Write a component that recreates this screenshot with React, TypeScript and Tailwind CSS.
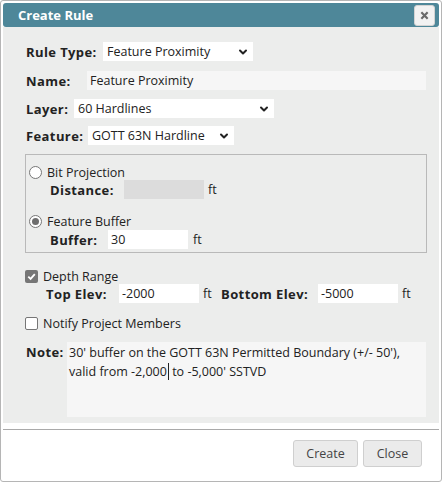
import { ChevronDown } from 'lucide-react'

const font = { fontFamily: '"Open Sans", "Noto Sans", sans-serif' }

function Label({ text, width }: { text: string; width: string }) {
  return <span className={`shrink-0 text-[13px] font-bold tracking-[0.4px] text-[#222] ${width}`}>{text}</span>
}

function Select({ value, width }: { value: string; width: string }) {
  return (
    <div className={`flex h-[19px] items-center justify-between bg-white pl-[4px] pr-[4px] ${width}`}>
      <span>{value}</span>
      <ChevronDown className="h-[12px] w-[12px] text-[#222]" strokeWidth={4} />
    </div>
  )
}

function Field({ value, width, bg = 'bg-white' }: { value: string; width: string; bg?: string }) {
  return <div className={`flex h-[19px] shrink-0 items-center px-[3px] ${width} ${bg}`}>{value}</div>
}

function Radio({ checked }: { checked?: boolean }) {
  return (
    <span className="flex h-[13px] w-[13px] items-center justify-center rounded-full border border-[#767676] bg-white">
      {checked && <span className="h-[7px] w-[7px] rounded-full bg-[#6e6e6e]" />}
    </span>
  )
}

function Checkbox({ checked }: { checked?: boolean }) {
  if (checked) {
    return (
      <span className="flex h-[13px] w-[13px] items-center justify-center rounded-[2px] bg-[#767676]">
        <svg viewBox="0 0 12 12" className="h-[11px] w-[11px]">
          <path d="M2.5 6.2 L5 8.6 L9.6 3.4" fill="none" stroke="white" strokeWidth="2" />
        </svg>
      </span>
    )
  }
  return <span className="h-[13px] w-[13px] rounded-[2px] border border-[#767676] bg-white" />
}

export default function App() {
  return (
    <div className="h-[482px] w-[442px] bg-white text-[12.5px] leading-[18px] text-[#222]" style={font}>
      <div className="flex h-full flex-col rounded-[3px] border border-[#b5b5b5] p-[2px]">
        {/* Title bar */}
        <div className="flex h-[24px] shrink-0 items-center justify-between rounded-[3px] bg-[#4e8799] pl-[15px] pr-[4px]">
          <span className="text-[13px] font-bold text-white">Create Rule</span>
          <button className="flex h-[21px] w-[21px] items-center justify-center rounded-[3px] border border-[#d3d3d3] bg-[#f2f2f2]">
            <svg viewBox="0 0 10 10" className="h-[9px] w-[9px]">
              <path d="M1.5 1.5 L8.5 8.5 M8.5 1.5 L1.5 8.5" stroke="#6a6a6a" strokeWidth="2.4" />
            </svg>
          </button>
        </div>

        {/* Content */}
        <div className="flex shrink-0 flex-col bg-[#ecedec] pb-[6px] pl-[23px] pr-[12px] pt-[15px]">
          <div className="flex h-[19px] items-center">
            <Label text="Rule Type:" width="w-[77px]" />
            <Select value="Feature Proximity" width="w-[150px]" />
          </div>
          <div className="mt-[10px] flex h-[19px] items-center">
            <Label text="Name:" width="w-[61px]" />
            <Field value="Feature Proximity" width="w-[339px]" bg="bg-[#f6f6f6]" />
          </div>
          <div className="mt-[9px] flex h-[19px] items-center">
            <Label text="Layer:" width="w-[48px]" />
            <Select value="60 Hardlines" width="w-[200px]" />
          </div>
          <div className="mt-[8px] flex h-[19px] items-center">
            <Label text="Feature:" width="w-[62px]" />
            <Select value="GOTT 63N Hardline" width="w-[146px]" />
          </div>

          <div className="-ml-[1px] mt-[9px] flex h-[99px] w-[402px] flex-col border border-[#b9b9b9] pl-[3px] pt-[11px]">
            <div className="flex h-[13px] items-center gap-[5px]">
              <Radio />
              <span>Bit Projection</span>
            </div>
            <div className="mt-[1px] flex h-[19px] items-center pl-[21px]">
              <Label text="Distance:" width="w-[74px]" />
              <Field value="" width="w-[80px]" bg="bg-[#dcdcdc]" />
              <span className="ml-[4px]">ft</span>
            </div>
            <div className="mt-[16px] flex h-[13px] items-center gap-[5px]">
              <Radio checked />
              <span>Feature Buffer</span>
            </div>
            <div className="mt-[2px] flex h-[19px] items-center pl-[21px]">
              <Label text="Buffer:" width="w-[58px]" />
              <Field value="30" width="w-[80px]" />
              <span className="ml-[5px]">ft</span>
            </div>
          </div>

          <div className="-ml-[1px] mt-[17px] flex h-[13px] items-center gap-[5px]">
            <Checkbox checked />
            <span>Depth Range</span>
          </div>
          <div className="mt-[1px] flex h-[19px] items-center pl-[20px]">
            <Label text="Top Elev:" width="w-[73px]" />
            <Field value="-2000" width="w-[80px]" />
            <span className="ml-[4px] w-[18px]">ft</span>
            <Label text="Bottom Elev:" width="w-[97px]" />
            <Field value="-5000" width="w-[80px]" />
            <span className="ml-[4px]">ft</span>
          </div>

          <div className="-ml-[1px] mt-[14px] flex h-[13px] items-center gap-[5px]">
            <Checkbox />
            <span>Notify Project Members</span>
          </div>

          <div className="mt-[12px] flex items-start">
            <div className="w-[41px] pt-[1px] leading-[19px]">
              <Label text="Note:" width="w-[41px]" />
            </div>
            <div className="h-[75px] w-[359px] bg-[#f6f6f6] px-[2px] pt-[1px] leading-[19px]">
              30' buffer on the GOTT 63N Permitted Boundary (+/- 50'), valid from{' '}
              <span className="border-r border-[#222] pr-[1px]">-2,000</span> to -5,000' SSTVD
            </div>
          </div>
        </div>

        {/* Footer */}
        <div className="mt-[6px] shrink-0 border-t border-[#a9a9a9]" />
        <div className="flex flex-1 items-start justify-end gap-[5px] pr-[17px] pt-[10px]">
          <button className="h-[27px] w-[65px] rounded-[3px] border border-[#cfcfcf] bg-[#ebebeb] text-[#444]">Create</button>
          <button className="h-[27px] w-[59px] rounded-[3px] border border-[#cfcfcf] bg-[#ebebeb] text-[#444]">Close</button>
        </div>
      </div>
    </div>
  )
}
